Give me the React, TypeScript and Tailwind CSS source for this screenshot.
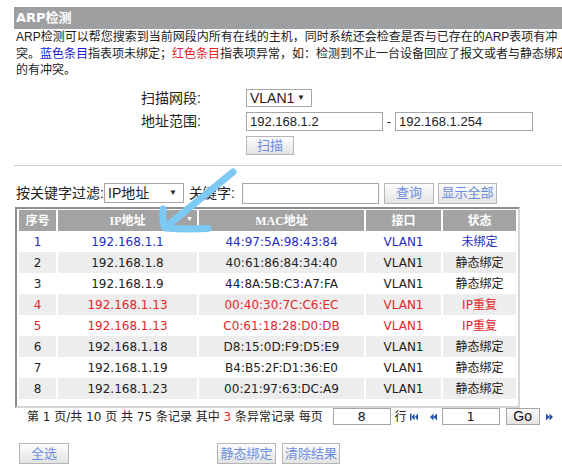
import React from "react";

type Tone = "blue" | "red" | "normal";

const rows: { no: number; ip: string; mac: string; port: string; status: string; tone: Tone }[] = [
  { no: 1, ip: "192.168.1.1", mac: "44:97:5A:98:43:84", port: "VLAN1", status: "未绑定", tone: "blue" },
  { no: 2, ip: "192.168.1.8", mac: "40:61:86:84:34:40", port: "VLAN1", status: "静态绑定", tone: "normal" },
  { no: 3, ip: "192.168.1.9", mac: "44:8A:5B:C3:A7:FA", port: "VLAN1", status: "静态绑定", tone: "normal" },
  { no: 4, ip: "192.168.1.13", mac: "00:40:30:7C:C6:EC", port: "VLAN1", status: "IP重复", tone: "red" },
  { no: 5, ip: "192.168.1.13", mac: "C0:61:18:28:D0:DB", port: "VLAN1", status: "IP重复", tone: "red" },
  { no: 6, ip: "192.168.1.18", mac: "D8:15:0D:F9:D5:E9", port: "VLAN1", status: "静态绑定", tone: "normal" },
  { no: 7, ip: "192.168.1.19", mac: "B4:B5:2F:D1:36:E0", port: "VLAN1", status: "静态绑定", tone: "normal" },
  { no: 8, ip: "192.168.1.23", mac: "00:21:97:63:DC:A9", port: "VLAN1", status: "静态绑定", tone: "normal" },
];

const toneClass: Record<Tone, string> = {
  blue: "text-[#1f2ec4]",
  red: "text-[#e2262b]",
  normal: "text-[#222222]",
};

const btn =
  "flex items-center justify-center border border-[#b6b6b6] bg-linear-to-b from-[#fdfdfd] to-[#e3e3e3] text-[13px] text-[#6d8ee0] font-['Liberation_Sans','Noto_Sans_CJK_SC',sans-serif]";

function Tri({ dir }: { dir: "first" | "prev" | "next" }) {
  if (dir === "first")
    return (
      <svg width="8" height="8" viewBox="0 0 8 8" className="fill-[#1f4fae]">
        <rect x="0" y="0.5" width="1.5" height="7" />
        <path d="M4.6 0.5 L1.6 4 L4.6 7.5Z M8 0.5 L5 4 L8 7.5Z" />
      </svg>
    );
  if (dir === "prev")
    return (
      <svg width="7" height="8" viewBox="0 0 7 8" className="fill-[#1f4fae]">
        <path d="M3.5 0.5 L0 4 L3.5 7.5Z M7 0.5 L3.5 4 L7 7.5Z" />
      </svg>
    );
  return (
    <svg width="7" height="8" viewBox="0 0 7 8" className="fill-[#1f4fae]">
      <path d="M0 0.5 L3.5 4 L0 7.5Z M3.5 0.5 L7 4 L3.5 7.5Z" />
    </svg>
  );
}

export default function App() {
  return (
    <div className="relative h-[472px] w-[562px] overflow-hidden bg-white pl-[14px] pt-[7px] text-[#222222] font-['Liberation_Sans','Noto_Sans_CJK_SC',sans-serif]">
      {/* title */}
      <div className="h-[22px] w-[560px] bg-[#9d9fa1] pl-[2px] text-[13px] font-bold leading-[22px] text-white font-['DejaVu_Sans','Noto_Sans_CJK_SC',sans-serif]">
        ARP检测
      </div>
      <div className="whitespace-nowrap pl-[2px] text-[12px] leading-[16.5px]">
        <div>ARP检测可以帮您搜索到当前网段内所有在线的主机，同时系统还会检查是否与已存在的ARP表项有冲</div>
        <div>
          突。<span className="text-[#1a1ad0]">蓝色条目</span>指表项未绑定；
          <span className="text-[#e3242b]">红色条目</span>指表项异常，如：检测到不止一台设备回应了报文或者与静态绑定
        </div>
        <div>的有冲突。</div>
      </div>

      {/* scan form */}
      <div className="ml-[127px] mt-[10.5px] flex flex-col gap-[5px] text-[13px]">
        <div className="flex h-[18px] items-center">
          <span className="w-[105px] text-[14px]">扫描网段:</span>
          <div className="flex h-[18px] w-[66px] items-center justify-between border border-[#a6a6a6] pl-[3px] pr-[6px]">
            <span className="text-[14px]">VLAN1</span>
            <span className="text-[8px]">▼</span>
          </div>
        </div>
        <div className="flex h-[19px] items-center">
          <span className="w-[105px] text-[14px]">地址范围:</span>
          <div className="flex h-[19px] w-[137px] items-center border border-[#a6a6a6] pl-[3px]">192.168.1.2</div>
          <span className="w-[12px] text-center">-</span>
          <div className="flex h-[19px] w-[138px] items-center border border-[#a6a6a6] pl-[3px]">192.168.1.254</div>
        </div>
        <div className="flex h-[19px] items-center pl-[105px]">
          <div className={`${btn} h-[19px] w-[48px]`}>扫描</div>
        </div>
      </div>

      <div className="mt-[10px] h-px w-[548px] bg-[#cfcfcf]" />

      {/* filter */}
      <div className="mt-[16px] flex h-[22px] items-center">
        <span className="w-[90px] pl-[2px] text-[14px]">按关键字过滤:</span>
        <div className="flex h-[20px] w-[80px] items-center justify-between border border-[#a6a6a6] pl-[3px] pr-[6px]">
          <span className="text-[14px]">IP地址</span>
          <span className="text-[8px]">▼</span>
        </div>
        <span className="ml-[5px] w-[53px] text-[14px]">关键字:</span>
        <div className="h-[21px] w-[137px] border border-[#a6a6a6]" />
        <div className={`${btn} ml-[5px] h-[21px] w-[50px]`}>查询</div>
        <div className={`${btn} ml-[4px] h-[21px] w-[59px]`}>显示全部</div>
      </div>

      {/* table */}
      <div className="ml-px mt-[3px] w-[505px] border-2 border-t-[#8c8c8c] border-l-[#8c8c8c] border-r-[#d6d6d6] border-b-[#d6d6d6] pt-px pb-[7px]">
        <table className="w-full table-fixed border-separate border-spacing-x-[2px] border-spacing-y-0 text-[12px] font-['DejaVu_Sans','Noto_Sans_CJK_SC',sans-serif]">
          <colgroup>
            <col className="w-[37px]" />
            <col className="w-[139px]" />
            <col className="w-[165px]" />
            <col className="w-[75px]" />
            <col className="w-[73px]" />
          </colgroup>
          <thead>
            <tr className="h-[21px] bg-[#a3a3a3] text-white font-['Liberation_Serif','Noto_Sans_CJK_SC',serif] font-bold">
              <th className="p-0">序号</th>
              <th className="relative p-0">
                IP地址
                <span className="absolute right-[4px] top-[6px] text-[7px] leading-none">▼</span>
              </th>
              <th className="p-0">MAC地址</th>
              <th className="p-0">接口</th>
              <th className="p-0">状态</th>
            </tr>
          </thead>
          <tbody>
            {rows.map((r) => (
              <tr key={r.no} className={`h-[21px] ${r.no % 2 === 0 ? "bg-[#ededed]" : "bg-white"} ${toneClass[r.tone]}`}>
                <td className="p-0 text-center">{r.no}</td>
                <td className="p-0 text-center">{r.ip}</td>
                <td className="p-0 text-center">{r.mac}</td>
                <td className="p-0 text-center">{r.port}</td>
                <td className="p-0 text-center">{r.status}</td>
              </tr>
            ))}
          </tbody>
        </table>
      </div>

      {/* pager */}
      <div className="flex h-[17px] items-center text-[12px] font-['DejaVu_Sans','Noto_Sans_CJK_SC',sans-serif]">
        <span className="w-[318.6px] whitespace-nowrap pl-[13px]">
          第 1 页/共 10 页 共 75 条记录 其中 <span className="text-[#e2262b]">3</span> 条异常记录 每页
        </span>
        <div className="flex h-[17px] w-[58px] items-center justify-center border border-[#a6a6a6] text-[13px]">8</div>
        <span className="ml-[4px]">行</span>
        <span className="ml-[3px] flex"><Tri dir="first" /></span>
        <span className="ml-[12px] flex"><Tri dir="prev" /></span>
        <div className="ml-[5px] flex h-[17px] w-[58px] items-center justify-center border border-[#a6a6a6] text-[13px]">1</div>
        <div className="ml-[6px] flex h-[17px] w-[34px] items-center justify-center border border-[#a6a6a6] bg-linear-to-b from-[#fdfdfd] to-[#e3e3e3] text-[14px] font-['Liberation_Sans',sans-serif] text-[#111111]">
          Go
        </div>
        <span className="ml-[6px] flex"><Tri dir="next" /></span>
      </div>

      {/* bottom buttons */}
      <div className="mt-[18px] flex h-[21px] items-center">
        <div className={`${btn} ml-[5px] h-[21px] w-[50px]`}>全选</div>
        <div className={`${btn} ml-[148px] h-[21px] w-[59px]`}>静态绑定</div>
        <div className={`${btn} ml-[6px] h-[21px] w-[58px]`}>清除结果</div>
      </div>

      {/* annotation arrow */}
      <svg className="pointer-events-none absolute left-0 top-0" width="562" height="472" viewBox="0 0 562 472">
        <g fill="none" stroke="#7ccaf3" strokeWidth="7" strokeLinecap="round" strokeLinejoin="round">
          <path d="M233 172 L167 226" />
          <path d="M163 209 Q162 221 165 228 Q186 229.5 208 228.5" />
        </g>
      </svg>
    </div>
  );
}
